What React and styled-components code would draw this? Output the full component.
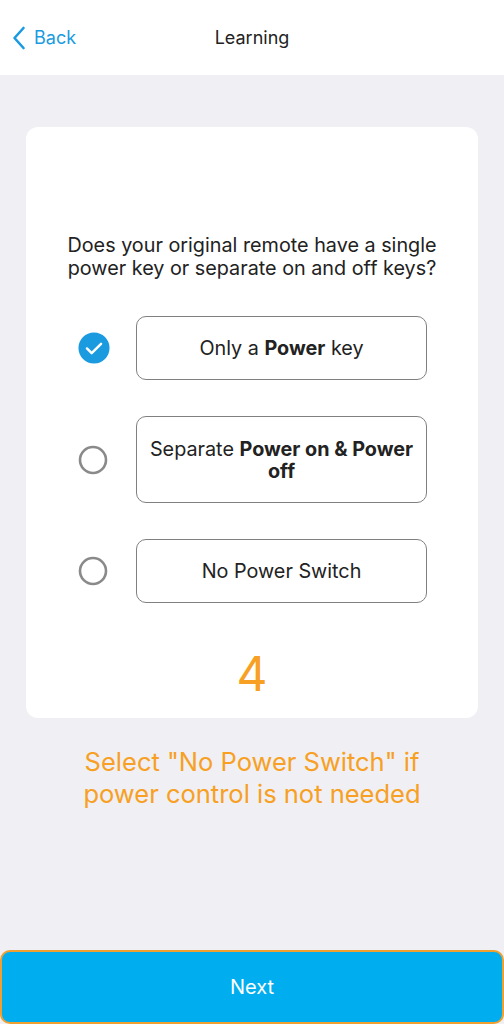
import React, { useState } from "react";
import styled, { createGlobalStyle } from "styled-components";

const GlobalStyle = createGlobalStyle`
  html, body {
    margin: 0;
    padding: 0;
    background: #efeff4;
    font-family: Inter, "Liberation Sans", Arial, sans-serif;
  }
  * { box-sizing: border-box; }
`;

const Page = styled.div`
  display: flex;
  flex-direction: column;
  min-height: 100vh;
`;

const Header = styled.header`
  height: 75px;
  background: #ffffff;
  display: grid;
  grid-template-columns: 1fr auto 1fr;
  align-items: center;
  padding: 0 12px;
`;

const BackButton = styled.button`
  display: flex;
  align-items: center;
  gap: 8px;
  background: none;
  border: none;
  padding: 0;
  color: #1a9be0;
  font-family: inherit;
  font-size: 18px;
  cursor: pointer;
  justify-self: start;
`;

const Title = styled.h1`
  margin: 0;
  font-size: 18px;
  font-weight: 400;
  color: #222;
`;

const Main = styled.main`
  flex: 1;
  display: flex;
  flex-direction: column;
  align-items: center;
  padding: 52px 26px 0;
`;

const Card = styled.section`
  width: 100%;
  background: #ffffff;
  border-radius: 12px;
  padding: 107px 0 18px;
  display: flex;
  flex-direction: column;
  align-items: center;
`;

const Question = styled.p`
  margin: 0 0 36px;
  font-size: 19.8px;
  line-height: 23px;
  color: #222;
  text-align: center;
`;

const Options = styled.div`
  width: 100%;
  display: flex;
  flex-direction: column;
  gap: 36px;
  padding: 0 51px 0 52px;
`;

const OptionRow = styled.label`
  display: grid;
  grid-template-columns: 30px 1fr;
  column-gap: 28px;
  align-items: center;
  cursor: pointer;
`;

const OptionBox = styled.div`
  min-height: ${(p) => (p.$tall ? "87px" : "64px")};
  border: 1.5px solid #808080;
  border-radius: 10px;
  display: flex;
  align-items: center;
  justify-content: center;
  text-align: center;
  padding: 0 6px;
  font-size: 19.8px;
  line-height: 22px;
  color: #222;

  b {
    font-weight: 700;
  }
`;

const Step = styled.div`
  margin-top: 45px;
  font-size: 48px;
  line-height: 52px;
  color: #f7a023;
`;

const Hint = styled.p`
  margin: 28px 0 0;
  font-size: 25.5px;
  line-height: 32px;
  color: #f7a023;
  text-align: center;
`;

const NextButton = styled.button`
  height: 74px;
  width: 100%;
  margin: 0;
  background: #00aeef;
  border: 2px solid #f0a030;
  border-radius: 10px;
  color: #ffffff;
  font-family: inherit;
  font-size: 20px;
  cursor: pointer;
`;

const Radio = ({ checked }) =>
  checked ? (
    <svg width="32" height="32" viewBox="0 0 34 34">
      <circle cx="17" cy="17" r="16.5" fill="#1a9be0" />
      <path d="M9.5 17.5l5 5 10-10" fill="none" stroke="#fff" strokeWidth="2.6" strokeLinecap="round" strokeLinejoin="round" />
    </svg>
  ) : (
    <svg width="30" height="30" viewBox="0 0 30 30">
      <circle cx="15" cy="15" r="13" fill="none" stroke="#8a8a8a" strokeWidth="2.6" />
    </svg>
  );

const options = [
  { id: "single", label: <>Only a <b>Power</b> key</> },
  { id: "separate", label: <>Separate <b>Power on &amp; Power off</b></>, tall: true },
  { id: "none", label: <>No Power Switch</> },
];

export default function App() {
  const [selected, setSelected] = useState("single");

  return (
    <>
      <GlobalStyle />
      <Page>
        <Header>
          <BackButton>
            <svg width="14" height="24" viewBox="0 0 14 24">
              <path d="M11.5 2L2.5 12l9 10" fill="none" stroke="#1a9be0" strokeWidth="2.6" strokeLinecap="round" strokeLinejoin="round" />
            </svg>
            Back
          </BackButton>
          <Title>Learning</Title>
          <span />
        </Header>
        <Main>
          <Card>
            <Question>
              Does your original remote have a single
              <br />
              power key or separate on and off keys?
            </Question>
            <Options>
              {options.map((o) => (
                <OptionRow key={o.id} onClick={() => setSelected(o.id)}>
                  <Radio checked={selected === o.id} />
                  <OptionBox $tall={o.tall}>
                    <span>{o.label}</span>
                  </OptionBox>
                </OptionRow>
              ))}
            </Options>
            <Step>4</Step>
          </Card>
          <Hint>
            Select "No Power Switch" if
            <br />
            power control is not needed
          </Hint>
        </Main>
        <NextButton>Next</NextButton>
      </Page>
    </>
  );
}
